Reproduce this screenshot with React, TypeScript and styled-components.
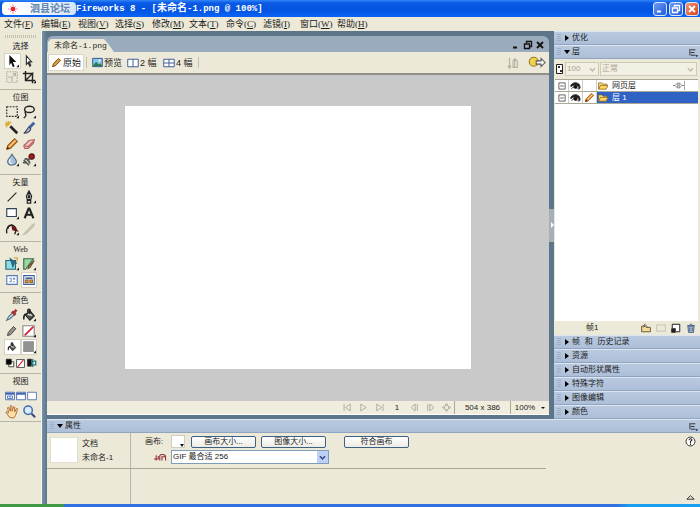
import React from "react";
import styled, { createGlobalStyle, css } from "styled-components";

const sans = `"Liberation Sans", "Noto Sans CJK SC", sans-serif`;
const serif = `"Liberation Serif", "Noto Sans CJK SC", serif`;
const mono = `"Liberation Mono", "Noto Sans CJK SC", monospace`;
const steel = "#5d7589";
const cream = "#ece9d8";

const Global = createGlobalStyle`
  * { box-sizing: border-box; }
  body { margin: 0; background: ${cream}; font: 8px/12px ${sans}; color: #1c1c1c; }
  button, select, input { font: inherit; color: inherit; margin: 0; padding: 0; border: 0; background: none; border-radius: 0; }
  ul { list-style: none; margin: 0; padding: 0; }
  h1, h2, p { margin: 0; font: inherit; }
  svg { display: block; flex: none; }
`;

const Shell = styled.div`
  display: grid;
  grid-template-rows: 17px 14px minmax(0, 1fr) 3px;
  height: 100vh;
  overflow: hidden;
`;

/* Title bar */
const TitleBar = styled.header`
  display: flex;
  align-items: center;
  padding: 0 1px 0 2px;
  background: linear-gradient(#2f86f5 0, #0a5ae6 3px, #0354e2 10px, #0a63f5 100%);
  color: #fff;
`;
const Badge = styled.div`
  display: flex;
  align-items: center;
  width: 74px;
  height: 13px;
  padding-left: 5px;
  gap: 11px;
  border-radius: 4px;
  background: linear-gradient(90deg, #fff 20%, #d5e5f8);
  color: #6186b2;
  font: 700 10px/12px ${sans};
`;
const Title = styled.h1`
  flex: 1;
  font: 700 9px/14px ${mono};
  white-space: pre;
`;
const TitleName = styled.span`
  font-size: 10px;
`;
const WindowButton = styled.button<{ $close?: boolean }>`
  width: 14px;
  height: 14px;
  margin-left: 2px;
  display: grid;
  place-items: center;
  border: 1px solid #d8e6fb;
  border-radius: 3px;
  background: ${(p) => (p.$close ? "linear-gradient(135deg, #f0987a, #d8401a)" : "linear-gradient(135deg, #6e9cf2, #2059dc)")};
`;

/* Menu */
const MenuBar = styled.nav`
  display: flex;
  gap: 8px;
  padding-left: 4px;
  background: ${cream};
`;
const MenuItem = styled.button`
  width: 29px;
  font: 9px/14px ${serif};
  text-align: left;
  white-space: nowrap;
`;

/* Workspace */
const Workspace = styled.div`
  display: grid;
  grid-template-columns: 42px minmax(0, 1fr);
  min-height: 0;
`;
const Toolbox = styled.aside`
  background: ${cream};
  padding-top: 4px;
  border-right: 1px solid #f7f5ec;
`;
const Grip = styled.div`
  height: 3px;
  margin: 0 5px 1px;
  background: repeating-linear-gradient(90deg, #c6c2b2 0 1px, transparent 1px 2px);
`;
const ToolSection = styled.section<{ $end: number }>`
  padding: 0 4px ${(p) => p.$end}px;
  border-bottom: 1px solid #b9b5a6;
`;
const ToolLabel = styled.h2<{ $latin?: boolean }>`
  height: 14px;
  padding-top: 1px;
  text-align: center;
  font: 8px/13px ${(p) => (p.$latin ? serif : sans)};
`;
const ToolGrid = styled.div<{ $cols?: number }>`
  display: grid;
  grid-template-columns: repeat(${(p) => p.$cols ?? 2}, 1fr);
  grid-auto-rows: 16px;
`;
const ToolButton = styled.button<{ $on?: boolean }>`
  display: grid;
  place-items: center;
  ${(p) => p.$on && css`background: #fff; box-shadow: inset 0 0 0 1px #d6d2c2;`}
`;
const Stage = styled.div`
  display: grid;
  grid-template-rows: minmax(0, 1fr) auto;
  min-height: 0;
  padding-left: 5px;
  background: linear-gradient(90deg, #7592ac, ${steel} 5px);
`;
const Upper = styled.div`
  display: grid;
  grid-template-columns: minmax(0, 1fr) 5px 146px;
  min-height: 0;
`;
const Divider = styled.div`
  display: grid;
  align-content: center;
`;
const DividerHandle = styled.button`
  height: 33px;
  display: grid;
  place-items: center;
  background: #a3b0b5;
`;

/* Document */
const DocWindow = styled.main`
  display: grid;
  grid-template-rows: 16px 23px minmax(0, 1fr) 14px;
  margin: 5px 0 4px;
  border-radius: 6px 6px 0 0;
  overflow: hidden;
  background: #9aabbe;
`;
const TabStrip = styled.div`
  display: flex;
  align-items: end;
  padding: 0 4px 0 1px;
`;
const Tab = styled.button`
  width: 66px;
  height: 13px;
  padding-left: 6px;
  text-align: left;
  white-space: nowrap;
  background: ${cream};
  clip-path: polygon(0 3px, 3px 0, 56px 0, 61px 6px, 66px 100%, 0 100%);
  font: 8px/13px ${mono};
`;
const DocControls = styled.div`
  display: flex;
  margin-left: auto;
  gap: 2px;
`;
const PlainButton = styled.button`
  display: grid;
  place-items: center;
  min-width: 10px;
  height: 14px;
`;
const ViewBar = styled.div`
  display: flex;
  align-items: center;
  padding: 0 3px 0 2px;
  background: ${cream};
  border-bottom: 2px solid #918f89;
`;
const ViewButton = styled.button<{ $on?: boolean; $w: number }>`
  display: flex;
  align-items: center;
  gap: 1px;
  width: ${(p) => p.$w}px;
  height: 15px;
  padding-left: 2px;
  white-space: pre;
  font: 9px/14px ${sans};
  ${(p) => p.$on && css`background: #fff; box-shadow: 0 0 0 1px #d8d5c7;`}
`;
const Rule = styled.span`
  width: 1px;
  height: 11px;
  margin: 0 3px;
  background: #c4c0b0;
`;
const Spacer = styled.span`
  flex: 1;
`;
const QuickExport = styled(PlainButton)`
  margin-left: 8px;
`;
const Pasteboard = styled.div`
  padding: 31px 78px 32px;
  background: #c9c9c9;
  display: grid;
`;
const Canvas = styled.div`
  background: #fff;
`;
const StatusBar = styled.div`
  display: flex;
  align-items: center;
  background: #f0eddf;
  border-bottom: 1px solid #fff;
`;
const Playback = styled.div`
  display: flex;
  align-items: center;
  gap: 1px;
  margin-left: auto;
`;
const StepButton = styled(PlainButton)`
  width: 15px;
`;
const Frame = styled.span`
  width: 18px;
  text-align: center;
`;
const StatusCell = styled.button<{ $w: number }>`
  width: ${(p) => p.$w}px;
  height: 13px;
  display: flex;
  align-items: center;
  justify-content: center;
  gap: 6px;
  border-left: 1px solid #aaa797;
  white-space: nowrap;
`;

/* Panels */
const Panels = styled.aside`
  display: flex;
  flex-direction: column;
  min-height: 0;
  background: ${cream};
`;
const PanelBar = styled.div`
  display: flex;
  align-items: center;
  flex: none;
  height: 14px;
  padding: 0 2px 0 3px;
  border-top: 1px solid #dce5f0;
  border-bottom: 1px solid #91a5c2;
  background: linear-gradient(#b9c9df, #adbfd8);
`;
const PanelGrip = styled.span`
  width: 4px;
  height: 8px;
  background: repeating-linear-gradient(#8da1bd 0 1px, transparent 1px 2px);
  opacity: 0.6;
`;
const PanelToggle = styled.button`
  display: flex;
  align-items: center;
  gap: 2px;
  flex: 1;
  padding-left: 3px;
  font: 8px/12px ${mono};
  text-align: left;
  white-space: pre;
`;
const LayerControls = styled.div`
  display: flex;
  align-items: center;
  gap: 1px;
  height: 20px;
  padding: 0 3px 0 1px;
`;
const SelectBox = styled.label<{ $w?: number; $off?: boolean }>`
  display: grid;
  grid-template-columns: minmax(0, 1fr) 11px;
  align-items: center;
  ${(p) => (p.$w ? css`width: ${p.$w}px;` : css`flex: 1;`)}
  height: 14px;
  border: 1px solid ${(p) => (p.$off ? "#cfcbb9" : "#7f9db9")};
  background: ${(p) => (p.$off ? "#f2efe3" : "#fff")};
  color: ${(p) => (p.$off ? "#aaa692" : "#1c1c1c")};
`;
const Select = styled.select`
  appearance: none;
  grid-area: 1 / 1 / 2 / 3;
  height: 12px;
  padding-left: 1px;
  line-height: 12px;
  opacity: 1;
`;
const Arrow = styled.span<{ $blue?: boolean }>`
  grid-area: 1 / 2;
  height: 12px;
  display: grid;
  place-items: center;
  pointer-events: none;
  background: ${(p) => (p.$blue ? "#bfd0f7" : "transparent")};
`;
const LayerList = styled.ul`
  flex: 1;
  margin: 0 2px 0 1px;
  background: #fff;
  border-top: 1px solid #aaa797;
`;
const LayerRow = styled.li`
  display: grid;
  grid-template-columns: 14px 14px 14px minmax(0, 1fr);
  height: 12px;
  border-bottom: 1px solid #aaa797;
`;
const LayerCell = styled.button`
  display: grid;
  place-items: center;
  border-right: 1px solid #d0cdc0;
`;
const LayerName = styled.div<{ $on?: boolean }>`
  display: flex;
  align-items: center;
  gap: 4px;
  padding: 0 2px 0 1px;
  line-height: 11px;
  ${(p) => p.$on && css`background: #2f62c4; color: #fff;`}
`;
const LayerEnd = styled.span`
  margin-left: auto;
  margin-right: 11px;
  border-right: 1px solid #aaa797;
`;
const LayerFooter = styled.div`
  display: flex;
  align-items: center;
  height: 14px;
  padding: 0 4px 0 32px;
`;
const FooterButtons = styled.div`
  display: flex;
  gap: 5px;
  margin-left: auto;
`;

/* Properties */
const Properties = styled.section`
  background: ${cream};
`;
const PropBody = styled.div`
  display: grid;
  grid-template-columns: 84px minmax(0, 1fr) 20px;
  height: 71px;
`;
const PropDoc = styled.div`
  display: grid;
  grid-template-columns: 28px 1fr;
  grid-template-rows: 32px 1fr;
  column-gap: 4px;
  padding-left: 3px;
  border-right: 1px solid #b9b5a6;
`;
const Thumb = styled.div`
  height: 26px;
  margin-top: 4px;
  background: #fff;
  border: 1px solid #e2dfd0;
`;
const DocText = styled.p`
  padding-top: 4px;
  line-height: 14px;
  white-space: nowrap;
`;
const PropMain = styled.div`
  display: grid;
  grid-template-columns: 26px minmax(0, 1fr);
  grid-template-rows: 15px 16px 1fr;
  padding: 1px 0 0 14px;
`;
const PropLabel = styled.span`
  display: flex;
  align-items: center;
  padding-right: 4px;
`;
const PropControls = styled.div`
  display: flex;
  align-items: center;
`;
const PushButton = styled.button<{ $gap: number }>`
  width: 65px;
  height: 12px;
  margin-left: ${(p) => p.$gap}px;
  border: 1px solid #3d6185;
  border-radius: 2px;
  background: linear-gradient(#fff, #edebe2);
  line-height: 10px;
  white-space: nowrap;
`;
const Swatch = styled.button`
  width: 14px;
  height: 13px;
  display: grid;
  place-items: end;
  background: #fff;
  border: 1px solid #d0cdbe;
`;
const PropSide = styled.div`
  display: flex;
  flex-direction: column;
  justify-content: space-between;
  align-items: center;
  padding: 1px 0;
`;
const PropRule = styled.div`
  grid-column: 1 / 3;
  margin: 3px 25% 0 -98px;
  border-top: 1px solid #aaa797;
`;
const Taskbar = styled.footer`
  background: linear-gradient(90deg, #3f9a46 0 63px, #2f6fe0 65px 88%, #189ff0 90%);
`;

type IconProps = { children: React.ReactNode; w?: number; h?: number; box?: string };
const Icon = ({ children, w = 14, h = w, box = "0 0 16 16" }: IconProps) => (
  <svg width={w} height={h} viewBox={box} fill="none" stroke="#222" strokeWidth="1.3" aria-hidden="true">
    {children}
  </svg>
);
const Corner = () => <path d="M13 15h3v-3z" fill="#111" stroke="none" />;
const Chevron = ({ color }: { color: string }) => (
  <Icon w={7} box="0 0 8 8"><path d="M1 2.5 4 5.5 7 2.5" stroke={color} strokeWidth="1.8" /></Icon>
);
const Pencil = ({ size = 14 }: { size?: number }) => (
  <Icon w={size}>
    <path d="M2 14 3 10 11 2l3 3-8 8z" fill="#e89a3c" stroke="#9c5714" />
    <path d="m2 14 1-3 2 2z" fill="#222" stroke="none" />
    <path d="m5 11 7-7" stroke="#ffd391" />
  </Icon>
);
const BucketShape = () => (
  <>
    <path d="m4 8 5-5 5 6-5 5z" fill="#555" />
    <path d="m6 8 3-3 3 4z" fill="#eee" stroke="none" />
    <path d="M9 7V2C7 0 6 3 7 5M5 7c-3 0-3 3-3 6" strokeWidth="1.8" />
  </>
);
const Folder = () => (
  <Icon w={10}><path d="M1 13V3h5l2 2h6v3" fill="#f8df83" stroke="#8e6820" /><path d="M1 13 4 7h12l-3 6z" fill="#ffd866" stroke="#8e6820" /></Icon>
);
const Eye = () => (
  <Icon w={11} h={8} box="0 0 16 12">
    <path d="M1 5c3-5 9-5 13-1l1 5-2 2V7C9 3 5 4 1 7z" fill="#222" />
    <path d="M2 10c2-3 6-3 9 0" /><circle cx="8" cy="7" r="2.6" fill="#111" />
  </Icon>
);
const Collapse = () => (
  <Icon w={8} box="0 0 9 9"><path d="M1 1h7v7H1zM2.5 4.5h4" stroke="#555" strokeWidth="1" /></Icon>
);
const Options = () => (
  <Icon w={9} box="0 0 10 10"><path d="M1 1v7M2 2h5M2 5h4M2 8h5" strokeWidth="1" /><path d="M7 8h3l-1.5 2z" fill="#111" stroke="none" /></Icon>
);
const Triangle = ({ open }: { open?: boolean }) => (
  <Icon w={6} box="0 0 6 6"><path d={open ? "M0 1h6L3 5z" : "M1 0v6l4-3z"} fill="#000" stroke="none" /></Icon>
);

const tools: Record<string, React.ReactNode> = {
  指针: <Icon><path d="m5 1 8 8H9l2 5-2 1-2-5-2 3z" fill="#111" stroke="none" /><Corner /></Icon>,
  部分选定: <Icon><path d="m5 2 6 7H8l2 4-1 1-2-4-2 2z" fill="#fff" stroke="#333" /></Icon>,
  缩放: <Icon><path d="M2 2h12v12H2z" stroke="#b5b1a4" strokeDasharray="2 1" /><path d="M3 8h5v5M9 7l3-3M9 4h3v3" stroke="#b5b1a4" /></Icon>,
  裁剪: <Icon><path d="M4 1v11h11M1 4h11v11M4 12l9-9" strokeWidth="1.6" /><Corner /></Icon>,
  选取框: <Icon><path d="M2 2h12v11H2z" strokeDasharray="2 1.4" /><Corner /></Icon>,
  套索: <Icon><ellipse cx="8.5" cy="5" rx="5.5" ry="3.5" strokeWidth="1.6" /><path d="M4 7c-2 2 2 3 0 6l-2 2" strokeWidth="1.6" /><Corner /></Icon>,
  魔术棒: <Icon><path d="m6 6 8 8" strokeWidth="3" /><path d="M4 0v3M0 4h3M1 1l4 4M7 1 5 3M1 7l2-2" stroke="#d9a820" strokeWidth="1.6" /></Icon>,
  刷子: <Icon><path d="m14 2-6 6" stroke="#3f64a8" strokeWidth="3.5" /><path d="m8 7 2 2c-1 4-4 5-8 5 3-1 3-5 6-7z" fill="#9fb6d8" stroke="#445" /></Icon>,
  铅笔: <Pencil />,
  橡皮擦: <Icon><path d="m2 10 6-6 6-1-1 4-6 6H3z" fill="#f6c6c2" stroke="#b55d5d" /><path d="m3 10 4 1 6-6" stroke="#b55d5d" /></Icon>,
  模糊: <Icon><path d="M8 1c1 4 5 5 5 9s-10 6-10 0c0-4 4-5 5-9z" fill="#a9c0d8" stroke="#52708e" /><path d="M6 7c-2 3 0 5 2 5" stroke="#fff" /><Corner /></Icon>,
  橡皮图章: <Icon><circle cx="11" cy="4" r="3" fill="#a52020" stroke="#501010" /><path d="m9 6-3 3M2 8l6 6M3 7c3-1 5 2 6 5M1 11h5" strokeWidth="2" stroke="#555" /><Corner /></Icon>,
  直线: <Icon><path d="M3 13 13 3" /></Icon>,
  钢笔: <Icon><path d="M8 1 5 7l1 4h4l1-4zM8 2v5M6 12h4v3H6z" fill="#ddd" /><circle cx="8" cy="8" r="1" fill="#111" /><Corner /></Icon>,
  矩形: <Icon><path d="M2 3h11v9H2z" fill="#fff" stroke="#345" /><Corner /></Icon>,
  文本: <Icon><path d="M3 14 7.5 3h1L13 14M5 10h6" strokeWidth="2.4" /></Icon>,
  自由变形: <Icon><path d="M2 13c-1-6 2-11 7-9s4 6 2 10" strokeWidth="1.5" /><path d="M3 8c1-4 4-5 7-4" strokeWidth="1.5" /><path d="m8 4 6 6-5-1z" fill="#8e1717" stroke="#611" /><Corner /></Icon>,
  刀子: <Icon><path d="M2 14 12 3l2-1-1 3-8 8z" fill="#dad6c6" stroke="#c2beae" /></Icon>,
  热点: <Icon><path d="M1 4h11v10H1z" fill="#8fdde0" stroke="#27647a" /><path d="m6 2 7 5-3 1-1 3z" fill="#3a708c" stroke="#27647a" /><path d="M10 1h4v4" stroke="#d5a43a" /><Corner /></Icon>,
  切片: <Icon><path d="M2 2h11L4 14H2z" fill="#9ed6a2" stroke="#356b4d" /><path d="m14 4-5 8-2 1 1-3z" fill="#cfb372" stroke="#65502a" /><Corner /></Icon>,
  隐藏切片: <Icon><path d="M2 3h12v10H2z" fill="#fff" stroke="#557cb8" /><path d="M5 6h2v4H5M9 6h2v1H9M9 10h2" stroke="#7896c4" /></Icon>,
  显示切片: <Icon><path d="M2 3h12v10H2z" fill="#fff" stroke="#3f61a0" /><path d="M4 5h8v2H4z" fill="#3f61a0" stroke="none" /><path d="M4 8h3v3H4zM9 8h3v3H9z" fill="#e5a03a" stroke="#9b682c" /></Icon>,
  滴管: <Icon><path d="m2 14 2-4 5-5 2 2-5 5z" fill="#c9e8f3" stroke="#54748a" /><path d="m8 4 4 4M10 6l3-4" stroke="#a13333" strokeWidth="3" /></Icon>,
  油漆桶: <Icon><BucketShape /><Corner /></Icon>,
  笔触颜色: <Icon w={12}><path d="M2 14 3 10 10 2l3 3-7 8z" fill="#99968d" stroke="#444" /></Icon>,
  无笔触: <Icon><path d="M1 2h13v12H1z" fill="#fff" stroke="#888" /><path d="M3 13 13 3" stroke="#d32532" strokeWidth="2" /><Corner /></Icon>,
  填充颜色: <Icon w={10}><BucketShape /></Icon>,
  灰色填充: <Icon><path d="M2 2h11v11H2z" fill="#929292" stroke="#929292" /><Corner /></Icon>,
  默认颜色: <Icon w={10}><path d="M6 6h8v8H6z" fill="#fff" /><path d="M2 2h8v8H2z" fill="#000" /></Icon>,
  无颜色: <Icon w={9}><path d="M1 1h14v14H1z" fill="#fff" /><path d="M3 14 13 2" stroke="#d32532" strokeWidth="2" /></Icon>,
  交换颜色: <Icon w={10}><path d="M1 2h6v11H1z" fill="#111" /><path d="M8 5h6v6H8m2-9-3 3 3 3m0 0-3 3 3 3" stroke="#20717c" strokeWidth="2" /></Icon>,
  标准屏幕: <Icon w={10}><path d="M1 2h14v12H1z" fill="#fff" stroke="#3758a4" /><path d="M1 3h14v3H1z" fill="#4167ba" stroke="none" /><path d="M4 8h8v4H4zM8 8v4" stroke="#4167ba" /></Icon>,
  带菜单全屏: <Icon w={10}><path d="M1 2h14v12H1z" fill="#fff" stroke="#3758a4" /><path d="M1 3h14v3H1z" fill="#4167ba" stroke="none" /></Icon>,
  全屏: <Icon w={10}><path d="M1 2h14v12H1z" fill="#fff" stroke="#607fba" strokeWidth="1.6" /></Icon>,
  手形: <Icon><path d="M5 14 1 8c1-1 2 0 3 1L3 3c1-1 2 0 3 4V1c1-1 2 0 2 1v5l2-5c1 0 2 1 1 2v4l2-4c1 0 2 0 1 2l-2 6-2 3z" fill="#ffdca8" stroke="#a66424" strokeWidth="1" /></Icon>,
  缩放镜: <Icon><circle cx="7" cy="6" r="4.8" fill="#d5ecff" stroke="#426bac" strokeWidth="1.7" /><path d="m11 10 4 4" stroke="#364f79" strokeWidth="2.5" /></Icon>,
};
const activeTools = ["指针", "显示切片", "填充颜色", "灰色填充"];

const Tool = ({ name }: { name: string }) => (
  <ToolButton type="button" aria-label={name} $on={activeTools.includes(name)}>{tools[name]}</ToolButton>
);
const Section = ({ label, end, rows, last }: { label: string; end: number; rows: string[]; last?: React.ReactNode }) => (
  <ToolSection $end={end}>
    <ToolLabel $latin={label === "Web"}>{label}</ToolLabel>
    <ToolGrid>{rows.map((n) => <Tool key={n} name={n} />)}</ToolGrid>
    {last}
  </ToolSection>
);

const Panel = ({ label, open, options }: { label: string; open?: boolean; options?: boolean }) => (
  <PanelBar>
    <PanelGrip />
    <PanelToggle type="button" aria-expanded={!!open}><Triangle open={open} />{label}</PanelToggle>
    {options && <PlainButton type="button" aria-label="选项"><Options /></PlainButton>}
  </PanelBar>
);

const menus = [["文件", "F"], ["编辑", "E"], ["视图", "V"], ["选择", "S"], ["修改", "M"], ["文本", "T"], ["命令", "C"], ["滤镜", "I"], ["窗口", "W"], ["帮助", "H"]];

const Min = ({ c }: { c: string }) => <Icon w={10} box="0 0 10 10"><path d="M2 7.5h4" stroke={c} strokeWidth="2" /></Icon>;
const Restore = ({ c }: { c: string }) => <Icon w={10} box="0 0 10 10"><path d="M3.5 3V1.5h5v5H7M1.5 4h5v4.5h-5z" stroke={c} /></Icon>;
const Close = ({ c }: { c: string }) => <Icon w={10} box="0 0 10 10"><path d="m2 2 6 6M8 2 2 8" stroke={c} strokeWidth="1.8" /></Icon>;

const playIcons = [
  ["第一帧", "M3 3v10M12 3v10L5 8z"], ["播放", "M4 3v10l8-5z"], ["最后一帧", "M4 3v10l7-5zM13 3v10"],
];
const stepIcons = [
  ["上一帧", "M9 3v10L3 8zM12 3v10"], ["下一帧", "M4 3v10M7 3v10l6-5z"], ["退出", "M8 2 6 5h4zM8 14l-2-3h4zM2 8l3-2v4zM14 8l-3-2v4z"],
];
const Steps = ({ items }: { items: string[][] }) => (
  <>
    {items.map(([name, d]) => (
      <StepButton key={name} type="button" aria-label={name}><Icon w={11}><path d={d} stroke="#aaa79c" /></Icon></StepButton>
    ))}
  </>
);

export default function App() {
  return (
    <Shell>
      <Global />
      <TitleBar>
        <Badge>
          <Icon w={12} box="0 0 12 12">
            <path d="M6 1v10M1 6h10M3 3l6 6M9 3 3 9" stroke="#f09aa5" strokeWidth="1" /><circle cx="6" cy="6" r="2.2" fill="#e52032" stroke="none" />
          </Icon>
          泗县论坛
        </Badge>
        <Title>Fireworks 8 - [<TitleName>未命名</TitleName>-1.png @ 100%]</Title>
        <WindowButton type="button" aria-label="最小化"><Min c="#fff" /></WindowButton>
        <WindowButton type="button" aria-label="还原"><Restore c="#fff" /></WindowButton>
        <WindowButton type="button" aria-label="关闭" $close><Close c="#fff" /></WindowButton>
      </TitleBar>
      <MenuBar>
        {menus.map(([t, k]) => <MenuItem key={t} type="button">{t}(<u>{k}</u>)</MenuItem>)}
      </MenuBar>
      <Workspace>
        <Toolbox>
          <Grip />
          <Section label="选择" end={4} rows={["指针", "部分选定", "缩放", "裁剪"]} />
          <Section label="位图" end={6} rows={["选取框", "套索", "魔术棒", "刷子", "铅笔", "橡皮擦", "模糊", "橡皮图章"]} />
          <Section label="矢量" end={4} rows={["直线", "钢笔", "矩形", "文本", "自由变形", "刀子"]} />
          <Section label="Web" end={4} rows={["热点", "切片", "隐藏切片", "显示切片"]} />
          <Section
            label="颜色" end={2} rows={["滴管", "油漆桶", "笔触颜色", "无笔触", "填充颜色", "灰色填充"]}
            last={<ToolGrid $cols={3}><Tool name="默认颜色" /><Tool name="无颜色" /><Tool name="交换颜色" /></ToolGrid>}
          />
          <ToolSection $end={1}>
            <ToolLabel>视图</ToolLabel>
            <ToolGrid $cols={3}><Tool name="标准屏幕" /><Tool name="带菜单全屏" /><Tool name="全屏" /></ToolGrid>
            <ToolGrid><Tool name="手形" /><Tool name="缩放镜" /></ToolGrid>
          </ToolSection>
        </Toolbox>
        <Stage>
          <Upper>
            <DocWindow>
              <TabStrip>
                <Tab type="button">未命名-1.png</Tab>
                <DocControls>
                  <PlainButton type="button" aria-label="最小化文档"><Min c="#111" /></PlainButton>
                  <PlainButton type="button" aria-label="还原文档"><Restore c="#111" /></PlainButton>
                  <PlainButton type="button" aria-label="关闭文档"><Close c="#111" /></PlainButton>
                </DocControls>
              </TabStrip>
              <ViewBar>
                <ViewButton type="button" $on $w={34}><Icon w={11}><path d="M2 14 4 9 11 2l3 3-8 8z" fill="#d79c35" stroke="#6b4818" /></Icon>原始</ViewButton>
                <Rule />
                <ViewButton type="button" $w={35}>
                  <Icon w={11}><path d="M1 2h14v12H1z" fill="#86c5ec" stroke="#234f86" /><path d="m1 13 5-6 4 4 2-2 3 4z" fill="#2c7a49" stroke="none" /><circle cx="11" cy="5" r="1.5" fill="#fff" stroke="none" /></Icon>预览
                </ViewButton>
                <ViewButton type="button" $w={36}><Icon w={12}><path d="M1 3h14v10H1zM8 3v10" fill="#fff" stroke="#3e5c9b" /></Icon>2 幅</ViewButton>
                <ViewButton type="button" $w={34}><Icon w={12}><path d="M1 3h14v10H1zM8 3v10M1 8h14" fill="#fff" stroke="#3e5c9b" /></Icon>4 幅</ViewButton>
                <Rule />
                <Spacer />
                <PlainButton type="button" aria-label="文件管理"><Icon><path d="M4 2v11m-2-2 2 3 2-3M10 13V4M8 6l2-3 3 3v7H8z" stroke="#b6b2a3" /></Icon></PlainButton>
                <QuickExport type="button" aria-label="快速导出"><Icon w={18} h={13} box="0 0 22 16"><circle cx="7" cy="7" r="5.5" fill="#f4d245" stroke="#98771e" /><path d="M10 6h6V3l5 5-5 5v-3h-6z" fill="#fff" stroke="#555" /></Icon></QuickExport>
              </ViewBar>
              <Pasteboard><Canvas /></Pasteboard>
              <StatusBar>
                <Playback>
                  <Steps items={playIcons} />
                  <Frame>1</Frame>
                  <Steps items={stepIcons} />
                </Playback>
                <StatusCell type="button" $w={56}>504 x 386</StatusCell>
                <StatusCell type="button" $w={39}>100%<Icon w={4} box="0 0 4 4"><path d="M0 1h4L2 3z" fill="#111" stroke="none" /></Icon></StatusCell>
              </StatusBar>
            </DocWindow>
            <Divider>
              <DividerHandle type="button" aria-label="折叠面板"><Icon w={4} h={6} box="0 0 4 6"><path d="M1 0v6l3-3z" fill="#fff" stroke="none" /></Icon></DividerHandle>
            </Divider>
            <Panels>
              <Panel label="优化" />
              <Panel label="层" open options />
              <LayerControls>
                <Icon w={9} h={12} box="0 0 9 12"><path d="M1.5 1.5h6v9h-6z" fill="#fff" strokeWidth="1" /><path d="M3 3h2v2H3zM5 7h2v2H5z" fill="#333" stroke="none" /></Icon>
                <SelectBox $w={34} $off><Select disabled aria-label="不透明度"><option>100</option></Select><Arrow><Chevron color="#c2beac" /></Arrow></SelectBox>
                <SelectBox $off><Select disabled aria-label="混合模式"><option>正常</option></Select><Arrow><Chevron color="#c2beac" /></Arrow></SelectBox>
              </LayerControls>
              <LayerList>
                <LayerRow>
                  <LayerCell type="button" aria-label="折叠网页层"><Collapse /></LayerCell>
                  <LayerCell type="button" aria-label="显示网页层"><Eye /></LayerCell>
                  <LayerCell type="button" aria-label="锁定网页层" />
                  <LayerName><Folder />网页层<LayerEnd><Icon w={11} h={9} box="0 0 16 12"><path d="M0 6h3l4-4v8L3 6M16 6h-3L9 2v8l4-4" stroke="#777" /></Icon></LayerEnd></LayerName>
                </LayerRow>
                <LayerRow>
                  <LayerCell type="button" aria-label="折叠层 1"><Collapse /></LayerCell>
                  <LayerCell type="button" aria-label="显示层 1"><Eye /></LayerCell>
                  <LayerCell type="button" aria-label="编辑层 1"><Pencil size={11} /></LayerCell>
                  <LayerName $on><Folder />层 1</LayerName>
                </LayerRow>
              </LayerList>
              <LayerFooter>
                帧1
                <FooterButtons>
                  <PlainButton type="button" aria-label="新建层"><Icon w={10}><path d="M1 14V5h5l2 2h7v7zM4 4l3-3M4 7l3-4 3 3" fill="#f5dc95" stroke="#4c4030" /></Icon></PlainButton>
                  <PlainButton type="button" aria-label="添加蒙版"><Icon w={10}><path d="M1 3h14v10H1z" stroke="#c2beae" /></Icon></PlainButton>
                  <PlainButton type="button" aria-label="新建位图"><Icon w={10}><path d="M2 8V2h12v12H8" fill="#fff" strokeWidth="1.6" /><path d="M1 9h6v6H1z" fill="#222" /></Icon></PlainButton>
                  <PlainButton type="button" aria-label="删除"><Icon w={10}><path d="M3 5h10l-1 10H4z" fill="#a9b8d2" stroke="#36527e" /><path d="M2 4h12M6 2h4M6 7v6M10 7v6" stroke="#36527e" /></Icon></PlainButton>
                </FooterButtons>
              </LayerFooter>
              {["帧 和 历史记录", "资源", "自动形状属性", "特殊字符", "图像编辑", "颜色"].map((n) => <Panel key={n} label={n} />)}
            </Panels>
          </Upper>
          <Properties>
            <Panel label="属性" open options />
            <PropBody>
              <PropDoc>
                <Thumb />
                <DocText>文档<br />未命名-1</DocText>
              </PropDoc>
              <PropMain>
                <PropLabel>画布:</PropLabel>
                <PropControls>
                  <Swatch type="button" aria-label="画布颜色"><Icon w={4} box="0 0 4 4"><path d="M0 1h4L2 4z" fill="#111" stroke="none" /></Icon></Swatch>
                  <PushButton type="button" $gap={6}>画布大小...</PushButton>
                  <PushButton type="button" $gap={5}>图像大小...</PushButton>
                  <PushButton type="button" $gap={18}>符合画布</PushButton>
                </PropControls>
                <PropLabel><Spacer /><Icon w={13} h={9} box="0 0 18 12"><path d="M0 8h6V4M3 3v7M8 4v6M11 10V5h5v5M8 4c0-3 8-3 8 1" stroke="#913038" strokeWidth="1.5" /></Icon></PropLabel>
                <PropControls>
                  <SelectBox $w={158}><Select aria-label="默认导出选项"><option>GIF 最合适 256</option></Select><Arrow $blue><Chevron color="#34508a" /></Arrow></SelectBox>
                </PropControls>
                <PropRule />
              </PropMain>
              <PropSide>
                <PlainButton type="button" aria-label="帮助"><Icon w={11}><circle cx="8" cy="8" r="6.5" fill="#fff" /><path d="M6 6c0-3 5-2 4 0L8 8v2M8 11v2" strokeWidth="1.5" /></Icon></PlainButton>
                <PlainButton type="button" aria-label="收起"><Icon w={9} box="0 0 10 10"><path d="M1 8h8L5 4z" strokeWidth="1" /></Icon></PlainButton>
              </PropSide>
            </PropBody>
          </Properties>
        </Stage>
      </Workspace>
      <Taskbar />
    </Shell>
  );
}
